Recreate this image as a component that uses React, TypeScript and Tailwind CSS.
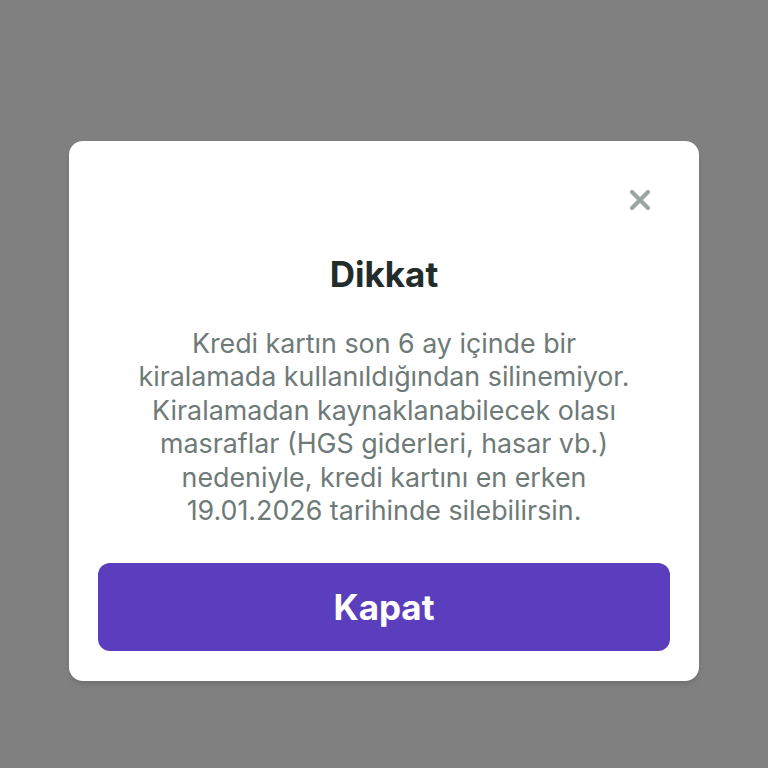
export default function App() {
  return (
    <div className="h-[768px] w-full bg-[#808080] flex justify-center pt-[141px]" style={{ fontFamily: "Inter, 'Noto Sans', sans-serif" }}>
      <div className="w-[630px] h-[540px] bg-white rounded-[14px] px-[29px] pt-[47px] pb-[30px] flex flex-col shadow-md">
        {/* Close */}
        <div className="flex justify-end pr-[18px] h-[24px]">
          <button className="w-[24px] h-[24px] flex items-center justify-center">
            <svg width="22" height="22" viewBox="0 0 22 22">
              <path d="M3 3 L19 19 M19 3 L3 19" stroke="#9ca6a4" strokeWidth="4.2" strokeLinecap="round" />
            </svg>
          </button>
        </div>

        {/* Title */}
        <h1 className="mt-[42px] text-center text-[35px] leading-[40px] font-bold text-[#222d2b]">
          Dikkat
        </h1>

        {/* Body */}
        <p className="mt-[33px] text-center text-[26.8px] leading-[33.4px] text-[#6e7a78]">
          Kredi kartın son 6 ay içinde bir
          <br />
          kiralamada kullanıldığından silinemiyor.
          <br />
          Kiralamadan kaynaklanabilecek olası
          <br />
          masraflar (HGS giderleri, hasar vb.)
          <br />
          nedeniyle, kredi kartını en erken
          <br />
          19.01.2026 tarihinde silebilirsin.
        </p>

        <div className="flex-1" />

        {/* Button */}
        <button className="h-[88px] w-full rounded-[12px] bg-[#5b3ebd] text-white text-[35px] font-bold">
          Kapat
        </button>
      </div>
    </div>
  );
}
